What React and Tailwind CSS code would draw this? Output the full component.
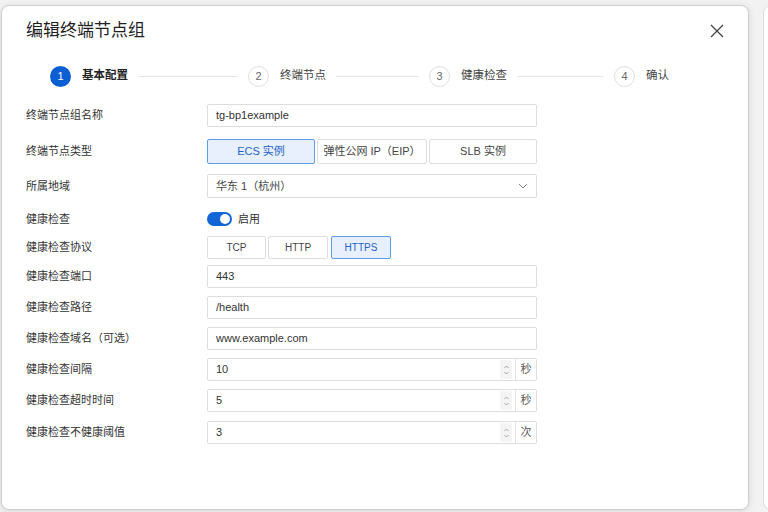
import React from "react";

const font = {
  fontFamily: '"Liberation Sans", "Noto Sans CJK SC", sans-serif',
};

function Step({ n, label, active }) {
  return (
    <div className="flex items-center shrink-0">
      <div
        className={
          active
            ? "w-[21px] h-[21px] rounded-full bg-[#0b5fd3] text-white text-[11px] flex items-center justify-center"
            : "w-[21px] h-[21px] rounded-full border border-[#dedede] bg-white text-[#666] text-[11px] flex items-center justify-center"
        }
      >
        {n}
      </div>
      <span
        className={
          active
            ? "ml-[11px] text-[11.5px] font-semibold text-[#222]"
            : "ml-[11px] text-[11.5px] text-[#444]"
        }
      >
        {label}
      </span>
    </div>
  );
}

function Line({ w }) {
  return <div className={`h-px bg-[#e6e6e6] mx-[10px] ${w}`} />;
}

function Label({ children }) {
  return (
    <div className="w-[181px] shrink-0 text-[11px] text-[#333]">{children}</div>
  );
}

function TextInput({ value }) {
  return (
    <div className="w-[330px] h-[23px] border border-[#dddddd] rounded-[2px] bg-white flex items-center px-[8px] text-[11px] text-[#333]">
      {value}
    </div>
  );
}

function NumberInput({ value, unit }) {
  return (
    <div className="w-[330px] h-[23px] border border-[#dddddd] rounded-[2px] bg-white flex items-center text-[11px] text-[#333]">
      <div className="flex-1 px-[8px]">{value}</div>
      <div className="w-[12px] h-[19px] mr-[3px] bg-[#f4f4f4] rounded-[2px] flex flex-col items-center justify-center">
        <svg width="7" height="14" viewBox="0 0 7 14" fill="none" stroke="#999" strokeWidth="0.9">
          <path d="M1.5 5 L3.5 3 L5.5 5" />
          <path d="M1.5 9 L3.5 11 L5.5 9" />
        </svg>
      </div>
      <div className="w-[21px] h-full border-l border-[#e3e3e3] flex items-center justify-center text-[11px] text-[#555]">
        {unit}
      </div>
    </div>
  );
}

function Row({ label, mt, h, children }) {
  return (
    <div className={`flex items-center ${mt} ${h}`}>
      <Label>{label}</Label>
      {children}
    </div>
  );
}

export default function App() {
  return (
    <div
      className="w-[768px] h-[512px] bg-[#f2f2f2] overflow-hidden flex pt-[5px] pl-[1px]"
      style={font}
    >
      <div className="w-[748px] h-[505px] bg-white border border-[#cfcfcf] rounded-[8px] shadow-[0_1px_6px_rgba(0,0,0,0.12)] shrink-0 flex flex-col">
        {/* header */}
        <div className="flex items-center justify-between h-[48px] pl-[24px] pr-[24px] pt-[2px]">
          <h1 className="text-[17px] text-[#1f1f1f] font-normal">编辑终端节点组</h1>
          <svg width="14" height="14" viewBox="0 0 14 14" stroke="#444" strokeWidth="1.3">
            <path d="M1 1 L13 13 M13 1 L1 13" />
          </svg>
        </div>

        {/* steps */}
        <div className="flex items-center pl-[48px] mt-[11px] h-[22px]">
          <Step n="1" label="基本配置" active />
          <Line w="w-[100px]" />
          <Step n="2" label="终端节点" />
          <Line w="w-[83px]" />
          <Step n="3" label="健康检查" />
          <Line w="w-[87px]" />
          <Step n="4" label="确认" />
        </div>

        {/* form */}
        <div className="flex flex-col pl-[24px]">
          <Row label="终端节点组名称" mt="mt-[17px]" h="h-[23px]">
            <TextInput value="tg-bp1example" />
          </Row>

          <Row label="终端节点类型" mt="mt-[12px]" h="h-[25px]">
            <div className="flex w-[330px] h-[25px] gap-[2px]">
              <div className="w-[108px] border border-[#5c9ce8] bg-[#e7f0fc] text-[#1d63c9] text-[11px] flex items-center justify-center rounded-[2px]">
                ECS 实例
              </div>
              <div className="w-[110px] border border-[#dddddd] text-[#444] text-[11px] flex items-center justify-center rounded-[2px]">
                弹性公网 IP（EIP）
              </div>
              <div className="flex-1 border border-[#dddddd] text-[#444] text-[11px] flex items-center justify-center rounded-[2px]">
                SLB 实例
              </div>
            </div>
          </Row>

          <Row label="所属地域" mt="mt-[10px]" h="h-[24px]">
            <div className="w-[330px] h-[24px] border border-[#dddddd] rounded-[2px] flex items-center justify-between px-[8px] text-[11px] text-[#444]">
              <span>华东 1（杭州）</span>
              <svg width="10" height="6" viewBox="0 0 10 6" fill="none" stroke="#888" strokeWidth="1">
                <path d="M1 1 L5 5 L9 1" />
              </svg>
            </div>
          </Row>

          <Row label="健康检查" mt="mt-[12px]" h="h-[18px]">
            <div className="flex items-center">
              <div className="w-[25px] h-[14px] rounded-full bg-[#1366d6] flex items-center justify-end pr-[2px]">
                <div className="w-[10px] h-[10px] rounded-full bg-white" />
              </div>
              <span className="ml-[6px] text-[11px] text-[#333]">启用</span>
            </div>
          </Row>

          <Row label="健康检查协议" mt="mt-[8px]" h="h-[23px]">
            <div className="flex h-[23px] gap-[2px]">
              <div className="w-[59px] border border-[#dddddd] text-[#444] text-[10px] flex items-center justify-center rounded-[2px]">
                TCP
              </div>
              <div className="w-[60px] border border-[#dddddd] text-[#444] text-[10px] flex items-center justify-center rounded-[2px]">
                HTTP
              </div>
              <div className="w-[60px] ml-[1px] border border-[#5c9ce8] bg-[#e7f0fc] text-[#1d63c9] text-[10px] flex items-center justify-center rounded-[2px]">
                HTTPS
              </div>
            </div>
          </Row>

          <Row label="健康检查端口" mt="mt-[6px]" h="h-[23px]">
            <TextInput value="443" />
          </Row>
          <Row label="健康检查路径" mt="mt-[8px]" h="h-[23px]">
            <TextInput value="/health" />
          </Row>
          <Row label="健康检查域名（可选）" mt="mt-[8px]" h="h-[23px]">
            <TextInput value="www.example.com" />
          </Row>
          <Row label="健康检查间隔" mt="mt-[8px]" h="h-[23px]">
            <NumberInput value="10" unit="秒" />
          </Row>
          <Row label="健康检查超时时间" mt="mt-[8px]" h="h-[23px]">
            <NumberInput value="5" unit="秒" />
          </Row>
          <Row label="健康检查不健康阈值" mt="mt-[9px]" h="h-[23px]">
            <NumberInput value="3" unit="次" />
          </Row>
        </div>
      </div>
      <div className="ml-[14px] w-[40px] h-[505px] bg-white border border-[#dcdcdc] rounded-[8px] shrink-0" />
    </div>
  );
}
